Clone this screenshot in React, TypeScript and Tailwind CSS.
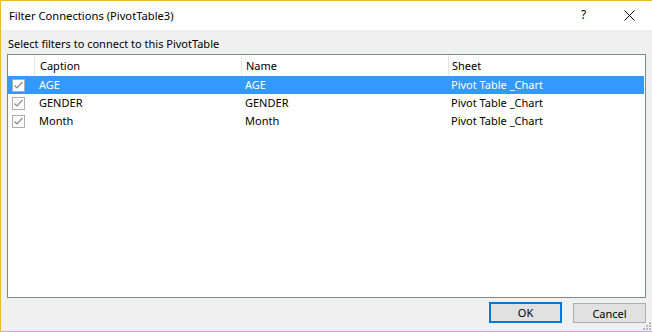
import React from "react";

const rows = [
  { caption: "AGE", name: "AGE", sheet: "Pivot Table _Chart", selected: true },
  { caption: "GENDER", name: "GENDER", sheet: "Pivot Table _Chart", selected: false },
  { caption: "Month", name: "Month", sheet: "Pivot Table _Chart", selected: false },
];

function Check() {
  return (
    <div className="w-[13px] h-[13px] border border-[#adadad] bg-white flex items-center justify-center">
      <svg width="11" height="11" viewBox="0 0 11 11">
        <path d="M1.5 5.5 L4 8 L9.5 2" fill="none" stroke="#8a8a8a" strokeWidth="1.2" />
      </svg>
    </div>
  );
}

export default function App() {
  return (
    <div
      className="w-[652px] h-[332px] border-t border-l border-b border-[#f2b824] flex flex-col text-[11px] text-black overflow-hidden"
      style={{ fontFamily: "'Segoe UI', 'Noto Sans', 'Open Sans', sans-serif" }}
    >
      <div className="h-[29px] bg-white flex items-center relative shrink-0">
        <span className="pl-[8px] leading-[16px] text-[11.2px]">Filter Connections (PivotTable3)</span>
        <span className="absolute left-[580px] top-[6px] leading-[16px] text-[12px]">?</span>
        <svg className="absolute left-[623px] top-[9px]" width="11" height="11" viewBox="0 0 11 11">
          <path d="M0.5 0.5 L10.5 10.5 M10.5 0.5 L0.5 10.5" stroke="#000" strokeWidth="1" />
        </svg>
      </div>
      <div className="flex-1 bg-[#f0f0f0] flex flex-col pt-[6px] relative">
        <div className="pl-[7px] h-[16px] leading-[16px]">Select filters to connect to this PivotTable</div>
        <div className="ml-[6px] mt-[2px] w-[639px] h-[244px] border border-[#828790] bg-white">
          <div className="flex h-[21px] items-center">
            <div className="w-[26px] h-full" />
            <div className="w-[207px] h-full border-l border-[#e5e5e5] pl-[5px] pt-[1px] flex items-center">Caption</div>
            <div className="w-[207px] h-full border-l border-[#e5e5e5] pl-[4px] pt-[1px] flex items-center">Name</div>
            <div className="flex-1 h-full border-l border-[#e5e5e5] pl-[3px] pt-[1px] flex items-center">Sheet</div>
          </div>
          {rows.map((r) => (
            <div
              key={r.caption}
              className={`flex h-[18px] items-center mr-[1px] ${r.selected ? "bg-[#3399ff] text-white" : "text-black"}`}
            >
              <div className="w-[26px] h-full flex items-center pl-[4px]">
                <Check />
              </div>
              <div className="w-[207px] pl-[5px]">{r.caption}</div>
              <div className="w-[207px] pl-[4px]">{r.name}</div>
              <div className="flex-1 pl-[3px]">{r.sheet}</div>
            </div>
          ))}
        </div>
        <div className="flex justify-end gap-[11px] mt-[4px] pr-[6px]">
          <button className="w-[73px] h-[21px] bg-[#e1e1e1] border-2 border-[#0078d7] flex items-center justify-center leading-none">
            OK
          </button>
          <button className="w-[73px] h-[20px] mt-[1px] bg-[#e1e1e1] border border-[#adadad] flex items-center justify-center leading-none">
            Cancel
          </button>
        </div>
        <svg className="absolute right-[1px] bottom-[1px]" width="10" height="10" viewBox="0 0 10 10">
          {[
            [8, 2],
            [5, 5],
            [8, 5],
            [2, 8],
            [5, 8],
            [8, 8],
          ].map(([x, y], i) => (
            <rect key={i} x={x} y={y} width="2" height="2" fill="#bcbcbc" />
          ))}
        </svg>
      </div>
    </div>
  );
}
